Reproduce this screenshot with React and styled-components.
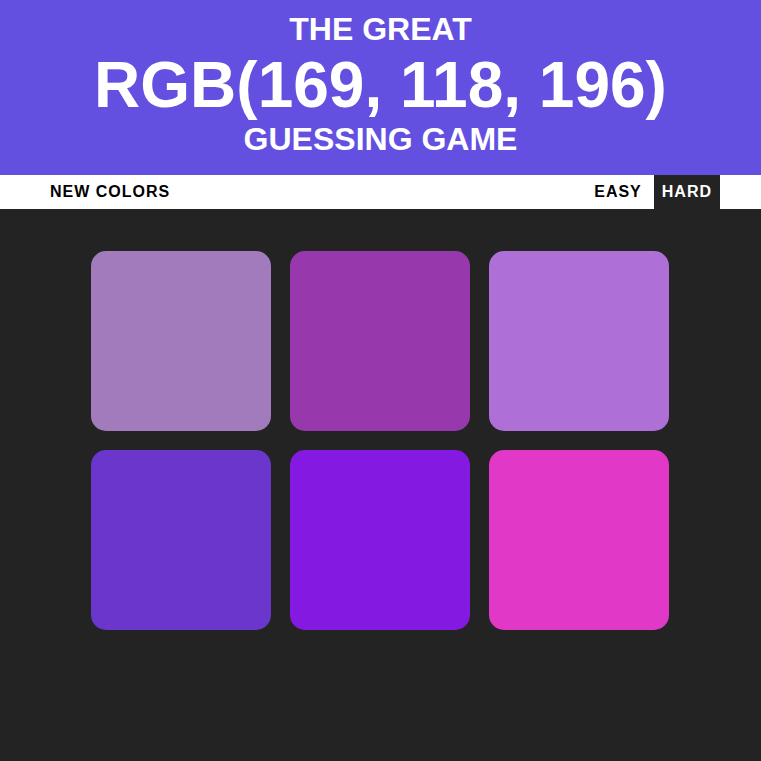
import React, { useState } from "react";
import styled, { createGlobalStyle } from "styled-components";

const GlobalStyle = createGlobalStyle`
  body {
    margin: 0;
    background: #232323;
    font-family: "Liberation Sans", Arial, sans-serif;
  }
`;

const colors = [
  "rgb(162, 123, 189)",
  "rgb(151, 57, 173)",
  "rgb(174, 111, 214)",
  "rgb(107, 54, 204)",
  "rgb(132, 26, 226)",
  "rgb(225, 56, 200)",
];

const Header = styled.header`
  background: rgb(99, 80, 224);
  color: #fff;
  text-align: center;
  text-transform: uppercase;
  font-weight: bold;
  padding: 11px 0 18px;
`;

const SmallLine = styled.div`
  font-size: 32px;
  line-height: 36px;
  margin-top: ${(p) => p.$gap || 0}px;
`;

const BigLine = styled.div`
  font-size: 64px;
  line-height: 68px;
  margin-top: 4px;
`;

const Stripe = styled.div`
  background: #fff;
  height: 34px;
  display: flex;
  align-items: stretch;
  padding: 0 41px 0 42px;
`;

const Spacer = styled.div`
  flex: 1;
`;

const StripeButton = styled.button`
  border: none;
  background: ${(p) => (p.$active ? "#232323" : "#fff")};
  color: ${(p) => (p.$active ? "#fff" : "#000")};
  font-family: inherit;
  font-weight: bold;
  font-size: 16px;
  letter-spacing: 1px;
  text-transform: uppercase;
  padding: 0 8px;
  height: 100%;
  cursor: pointer;
  outline: none;
`;

const ModeGroup = styled.div`
  display: flex;
  gap: 4px;
`;

const Grid = styled.div`
  display: grid;
  grid-template-columns: repeat(3, 180px);
  gap: 19px;
  justify-content: center;
  margin-top: 42px;
  padding-right: 1px;
`;

const Square = styled.div`
  width: 180px;
  height: 180px;
  border-radius: 15px;
  background: ${(p) => p.$color};
`;

export default function App() {
  const [mode, setMode] = useState("hard");
  return (
    <>
      <GlobalStyle />
      <Header>
        <SmallLine>The Great</SmallLine>
        <BigLine>RGB(169, 118, 196)</BigLine>
        <SmallLine $gap={2}>Guessing Game</SmallLine>
      </Header>
      <Stripe>
        <StripeButton>New Colors</StripeButton>
        <Spacer />
        <ModeGroup>
          <StripeButton $active={mode === "easy"} onClick={() => setMode("easy")}>
            Easy
          </StripeButton>
          <StripeButton $active={mode === "hard"} onClick={() => setMode("hard")}>
            Hard
          </StripeButton>
        </ModeGroup>
      </Stripe>
      <Grid>
        {colors.map((c, i) => (
          <Square key={i} $color={c} />
        ))}
      </Grid>
    </>
  );
}
